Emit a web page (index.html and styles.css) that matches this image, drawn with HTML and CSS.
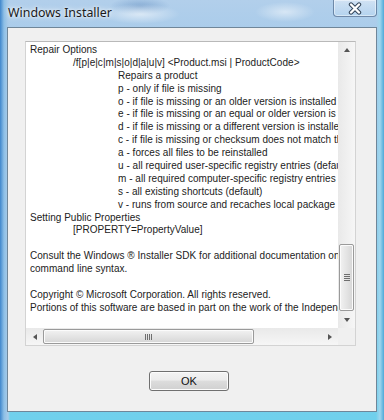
FILE: index.html
```html
<!DOCTYPE html>
<html lang="en">
<head>
  <meta charset="UTF-8" />
  <title>Windows Installer</title>
  <link rel="stylesheet" href="styles.css">
</head>
<body>

  <div class="window">
    <div class="titlebar">
      <span class="title">Windows Installer</span>
      <div class="close">
        <svg width="16" height="13" viewBox="0 0 16 13">
          <path d="M4 2.5 L12 10.5 M12 2.5 L4 10.5" stroke="#34465a" stroke-width="4.4" stroke-linecap="round"/>
          <path d="M4 2.5 L12 10.5 M12 2.5 L4 10.5" stroke="#ffffff" stroke-width="2.4" stroke-linecap="round"/>
        </svg>
      </div>
    </div>

    <div class="client">
      <div class="textbox">
        <div class="viewport">
          <div class="line">Repair Options</div>
          <div class="line tab1">/f[p|e|c|m|s|o|d|a|u|v] &lt;Product.msi | ProductCode&gt;</div>
          <div class="line tab2">Repairs a product</div>
          <div class="line tab2">p - only if file is missing</div>
          <div class="line tab2">o - if file is missing or an older version is installed (default)</div>
          <div class="line tab2">e - if file is missing or an equal or older version is installed</div>
          <div class="line tab2">d - if file is missing or a different version is installed</div>
          <div class="line tab2">c - if file is missing or checksum does not match the calculated value</div>
          <div class="line tab2">a - forces all files to be reinstalled</div>
          <div class="line tab2">u - all required user-specific registry entries (default)</div>
          <div class="line tab2">m - all required computer-specific registry entries (default)</div>
          <div class="line tab2">s - all existing shortcuts (default)</div>
          <div class="line tab2">v - runs from source and recaches local package</div>
          <div class="line">Setting Public Properties</div>
          <div class="line tab1">[PROPERTY=PropertyValue]</div>
          <div class="line">&nbsp;</div>
          <div class="line">Consult the Windows &reg; Installer SDK for additional documentation on the</div>
          <div class="line">command line syntax.</div>
          <div class="line">&nbsp;</div>
          <div class="line">Copyright &copy; Microsoft Corporation. All rights reserved.</div>
          <div class="line">Portions of this software are based in part on the work of the Independent JPEG Group.</div>
        </div>

        <div class="vscroll">
          <div class="arrow"><span class="tri up"></span></div>
          <div class="track vtrack">
            <div class="thumb vthumb"><span class="grip"></span></div>
          </div>
          <div class="arrow"><span class="tri down"></span></div>
        </div>

        <div class="hscroll">
          <div class="arrow"><span class="tri left"></span></div>
          <div class="track htrack">
            <div class="thumb hthumb"><span class="grip"></span></div>
          </div>
          <div class="arrow"><span class="tri right"></span></div>
        </div>

        <div class="corner"></div>
      </div>

      <div class="actions">
        <button class="ok">OK</button>
      </div>
    </div>
  </div>

</body>
</html>
```

FILE: styles.css
```css
body {
  margin: 0;
  background-color: #6cc4e4;
}

.window {
  width: 384px;
  height: 420px;
  display: flex;
  flex-direction: column;
  background:
    radial-gradient(ellipse 40px 10px at 140px 14px, rgba(255, 255, 255, 0.55), transparent),
    radial-gradient(ellipse 30px 10px at 285px 12px, rgba(255, 255, 255, 0.5), transparent),
    radial-gradient(ellipse 30px 9px at 140px 6px, rgba(60, 110, 170, 0.35), transparent),
    linear-gradient(to right, #3f86cc 0px, #8dbfe6 4px, #a9cbe9 8px, transparent 10px),
    linear-gradient(to left, #4fa9d8 0px, #9fd6ee 4px, transparent 8px),
    linear-gradient(to bottom, #b2cfeb 0px, #a7cbea 40px, #8ecbe9 200px, #6fd0ec 420px);
}

/* title bar */
.titlebar {
  height: 27px;
  display: flex;
  align-items: flex-start;
  justify-content: space-between;
  padding-left: 8px;
}

.title {
  font-family: "Noto Sans", sans-serif;
  font-size: 12.4px;
  color: #1a1a1a;
  margin-top: 4px;
  text-shadow: 0 0 6px #ffffff, 0 0 3px rgba(255, 255, 255, 0.9);
}

.close {
  width: 44px;
  height: 17px;
  margin-right: 7px;
  box-sizing: border-box;
  border: 1px solid rgba(50, 80, 120, 0.6);
  border-top: none;
  border-radius: 0 0 4px 4px;
  background: linear-gradient(to bottom, rgba(255, 255, 255, 0.4), rgba(190, 220, 245, 0.4));
  box-shadow: inset 0 0 0 1px rgba(255, 255, 255, 0.45);
  display: flex;
  align-items: center;
  justify-content: center;
}

/* client area */
.client {
  flex: 1;
  margin: 0 7px 8px 7px;
  background-color: #f0f0f0;
  border: 1px solid #6f8699;
  padding: 13px 20px 0 17px;
  display: flex;
  flex-direction: column;
}

.textbox {
  height: 305px;
  box-sizing: border-box;
  border: 1px solid #d3d3d3;
  border-top-color: #b9b9b9;
  background-color: #ffffff;
  display: grid;
  grid-template-columns: minmax(0, 1fr) 17px;
  grid-template-rows: minmax(0, 1fr) 17px;
}

.viewport {
  overflow: hidden;
  padding: 2px 0 0 4px;
  font-family: "Liberation Sans", Arial, sans-serif;
  font-size: 10px;
  letter-spacing: 0.03px;
  color: #222222;
}

.line {
  height: 12.9px;
  line-height: 12.9px;
  white-space: pre;
}

.tab1 {
  padding-left: 43px;
}

.tab2 {
  padding-left: 88px;
}

/* scrollbars */
.vscroll {
  display: grid;
  grid-template-rows: 17px 1fr 17px;
  background: linear-gradient(to right, #e9e9e9, #f6f6f6);
}

.hscroll {
  display: grid;
  grid-template-columns: 17px 1fr 17px;
  background: linear-gradient(to bottom, #e9e9e9, #f6f6f6);
}

.corner {
  background-color: #f0f0f0;
}

.arrow {
  display: flex;
  align-items: center;
  justify-content: center;
}

.tri {
  width: 0;
  height: 0;
  border: 3px solid transparent;
}

.tri.up {
  border-bottom: 4px solid #555555;
  border-top-width: 0;
  margin-top: -2px;
}

.tri.down {
  border-top: 4px solid #555555;
  border-bottom-width: 0;
}

.tri.left {
  border-right: 4px solid #555555;
  border-left-width: 0;
}

.tri.right {
  border-left: 4px solid #555555;
  border-right-width: 0;
}

.track {
  display: flex;
}

.vtrack {
  flex-direction: column;
  justify-content: flex-end;
}

.thumb {
  box-sizing: border-box;
  border: 1px solid #9a9a9a;
  border-radius: 2px;
  display: flex;
  align-items: center;
  justify-content: center;
  box-shadow: inset 0 0 0 1px #fbfbfb;
}

.vthumb {
  height: 67px;
  margin: 0 1px;
  background: linear-gradient(to right, #f2f2f2, #e4e4e4 50%, #d6d6d6);
}

.hthumb {
  width: 211px;
  margin: 1px 0;
  background: linear-gradient(to bottom, #f2f2f2, #e4e4e4 50%, #d6d6d6);
}

.vthumb .grip {
  width: 6px;
  height: 7px;
  background: repeating-linear-gradient(to bottom, #6e6e6e 0 1px, transparent 1px 2px);
}

.hthumb .grip {
  width: 7px;
  height: 6px;
  background: repeating-linear-gradient(to right, #6e6e6e 0 1px, transparent 1px 2px);
}

/* button row */
.actions {
  display: flex;
  justify-content: center;
  padding-top: 25px;
}

.ok {
  width: 80px;
  height: 20px;
  margin-left: -3px;
  border: 1px solid #707070;
  border-radius: 3px;
  background: linear-gradient(to bottom, #f4f4f4 0%, #ececec 45%, #dddddd 50%, #d0d0d0 100%);
  box-shadow: inset 0 0 0 1px #fcfcfc;
  font-family: "Liberation Sans", Arial, sans-serif;
  font-size: 11px;
  color: #111111;
  padding: 0;
}
```
